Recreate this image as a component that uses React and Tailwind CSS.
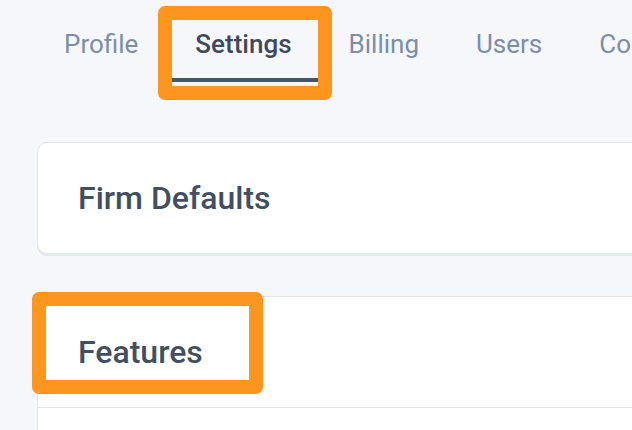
import React from "react";

const tabs = ["Profile", "Settings", "Billing", "Users", "Contacts"];

export default function App() {
  return (
    <div
      className="relative w-[632px] h-[430px] overflow-hidden bg-[#f6f7fb]"
      style={{ fontFamily: "Roboto, 'Noto Sans', sans-serif" }}
    >
      <nav className="flex pl-[35.5px] whitespace-nowrap">
        {tabs.map((t) => {
          const active = t === "Settings";
          return (
            <div
              key={t}
              className={
                active
                  ? "px-[28.5px] pt-[28px] pb-[18px] border-b-4 border-[#475569] text-[26px] leading-[32px] font-medium text-[#3e4a5b]"
                  : "px-[28.5px] pt-[28px] pb-[18px] border-b-4 border-transparent text-[26px] leading-[32px] text-[#7b8ea8]"
              }
            >
              {t}
            </div>
          );
        })}
      </nav>

      <div className="flex flex-col gap-[42px] pl-[37px] pt-[60px] w-[720px]">
        <div className="rounded-[10px] border border-[#e2e5ec] bg-white shadow-[0_2px_0_#e6e8ee] pl-[40px] py-[37px]">
          <h2 className="text-[32px] leading-[36px] font-medium text-[#414f61]">Firm Defaults</h2>
        </div>

        <div className="rounded-[10px] border border-[#e2e5ec] bg-white">
          <div className="pl-[40px] py-[37px] border-b border-[#e2e5ec]">
            <h2 className="text-[32px] leading-[36px] font-medium text-[#414f61]">Features</h2>
          </div>
          <div className="h-[60px]" />
        </div>
      </div>

      <div className="absolute left-[158px] top-[6px] w-[174px] h-[94px] border-[14px] border-[#fd961f] rounded-[7px]" />
      <div className="absolute left-[32px] top-[292px] w-[231px] h-[102px] border-[14px] border-[#fd961f] rounded-[7px]" />
    </div>
  );
}
